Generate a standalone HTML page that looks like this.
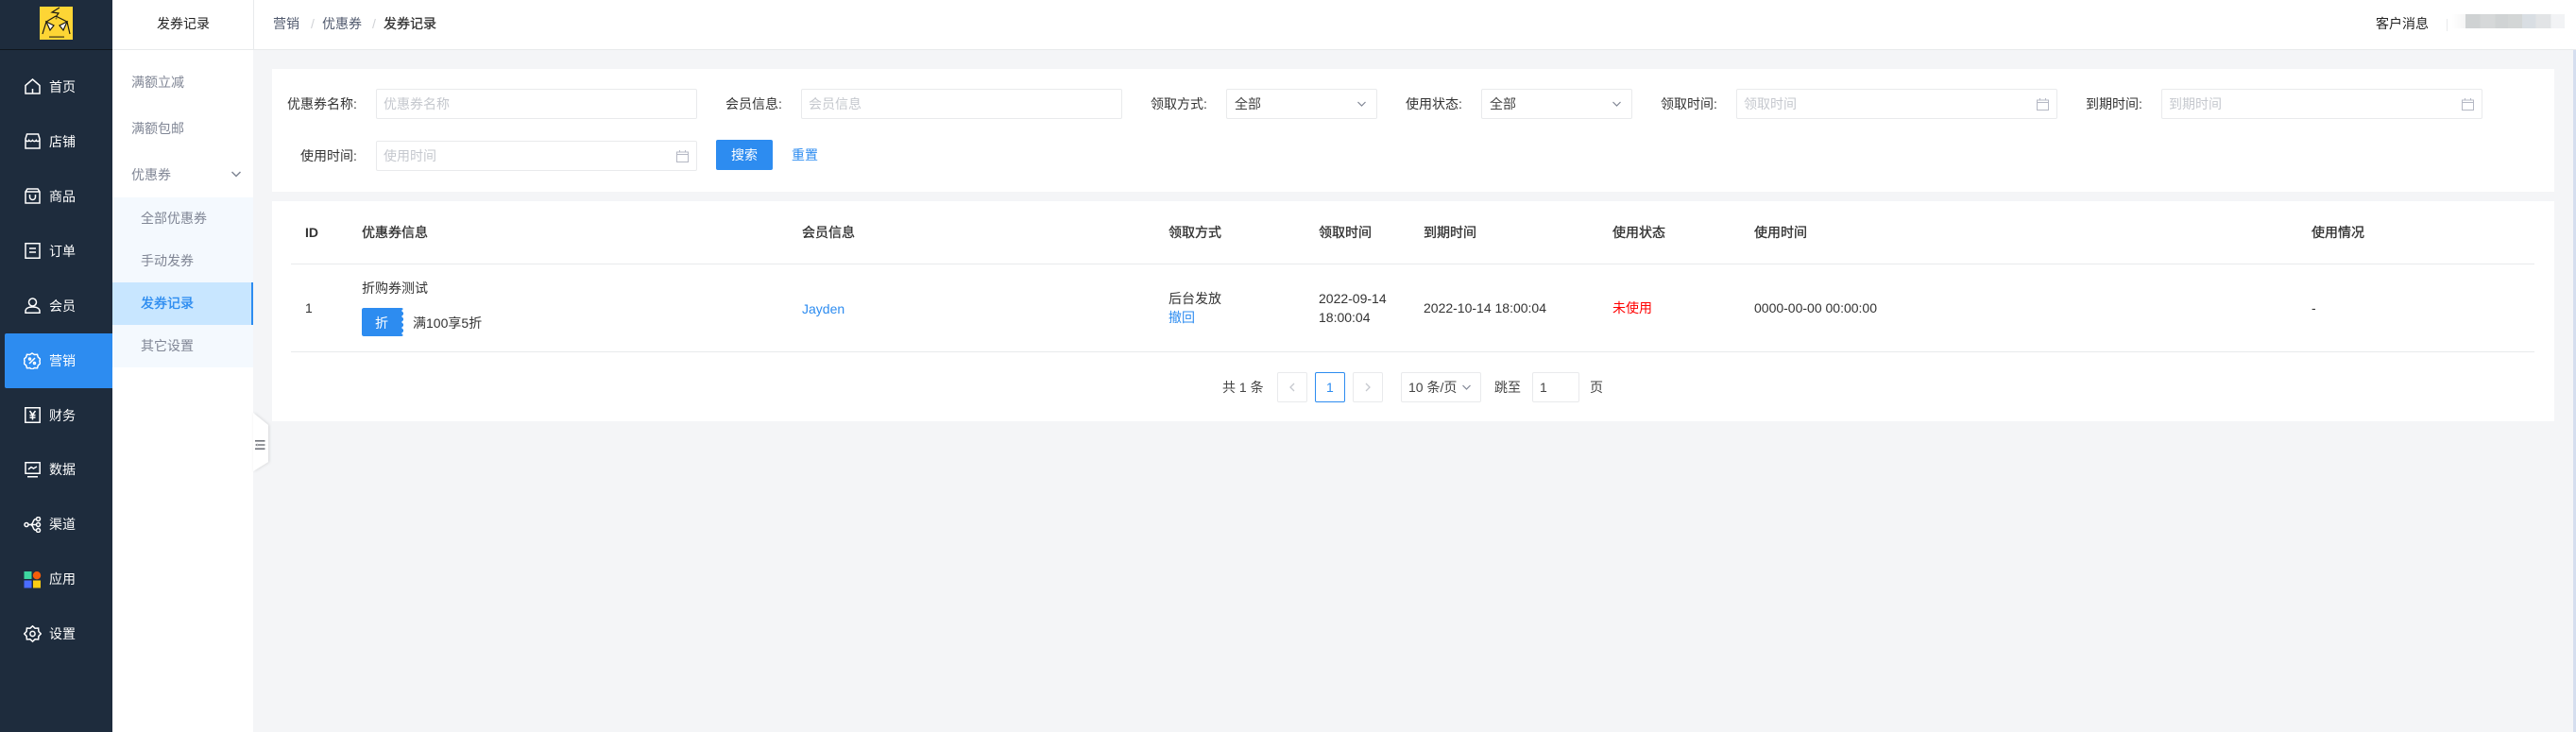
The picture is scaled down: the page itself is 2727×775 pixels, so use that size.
<!DOCTYPE html>
<html lang="zh"><head><meta charset="utf-8"><title>发券记录</title>
<style>
*{box-sizing:border-box}
html,body{margin:0;padding:0}
body{width:2727px;height:775px;position:relative;overflow:hidden;background:#f4f5f7;font:14px/20px "Liberation Sans","Noto Sans CJK SC",sans-serif;color:#515a6e}
.a,.t,.b,svg{position:absolute}
.t{white-space:nowrap;line-height:20px}
.m{color:#fff;left:52px}
.s{color:#808695}
.l{color:#333}
.h{color:#333;top:236px;-webkit-text-stroke:.35px #333}
.c{color:#444}
.b{background:#fff;border:1px solid #e9eaec;border-radius:2px;height:32px}
.p{color:#c5c8ce}
.k{color:#2d8cf0}
svg{fill:none;stroke:#fff;stroke-width:1.5}
</style></head><body>
<!-- dark sidebar -->
<div class="a" style="left:0;top:0;width:119px;height:775px;background:#1e2c3d"></div>
<div class="a" style="left:0;top:52px;width:119px;height:1px;background:#10161e"></div>
<svg style="left:42px;top:7px;stroke:none" width="35" height="35" viewBox="0 0 35 35">
<rect width="35" height="35" fill="#fdd535"/>
<path d="M21 1l-8 5 7 1-3 4M17 10L7 16 3 29M17 10l12 6 3 13" stroke="#1c1a12" stroke-width="1.200" fill="none"/>
<path d="M7 16l8 4-4 5zM29 16l-8 4 4 5z" fill="#fff" stroke="#1c1a12" stroke-width="1.200"/>
<circle cx="17.500" cy="12.500" r="1" fill="#7a6a20"/>
<rect x="10" y="31.500" width="16" height="1.200" fill="#3a3318"/>
</svg>
<div class="a" style="left:5px;top:353px;width:114px;height:58px;background:#2d8cf0;border-radius:2px 0 0 2px"></div>
<!-- icons -->
<svg style="left:26px;top:83px" width="17" height="17" viewBox="0 0 17 17"><path d="M1 7.500L8.500 1 16 7.500V16H1zM8.500 16v-5"/></svg>
<svg style="left:26px;top:141px" width="17" height="17" viewBox="0 0 17 17"><path d="M2.500 1h12L16 6v10H1V6zM1 7.500c2 1.500 3 1.500 3.700 0 1 1.500 2.500 1.500 3.800 0 1 1.500 2.800 1.500 3.800 0 .8 1.500 2 1.500 3.700 0"/></svg>
<svg style="left:26px;top:199px" width="17" height="17" viewBox="0 0 17 17"><path d="M3 1h11l2 3v12H1V4zM1 4h15M5.500 7v2.500a3 3 0 006 0V7"/></svg>
<svg style="left:26px;top:257px" width="17" height="17" viewBox="0 0 17 17"><path d="M1 .8h15v15.500H1zM5 6h7M5 10h7"/></svg>
<svg style="left:26px;top:315px" width="17" height="17" viewBox="0 0 17 17"><circle cx="8.500" cy="5" r="4"/><path d="M1 16.200v-1.700c0-3 3-4.500 7.500-4.500s7.500 1.500 7.500 4.500v1.700z"/></svg>
<svg style="left:25px;top:373px" width="18" height="18" viewBox="0 0 18 18"><path d="M9 1l2.500 1.500 3-.2.800 2.800L17.500 7 17 9.500l.5 2.500-2.200 1.900-.8 2.800-3-.2L9 18l-2.500-1.500-3 .2-.8-2.800L.5 12 1 9.500.5 7l2.200-1.900.8-2.800 3 .2zM6 12l6-6"/><circle cx="6.500" cy="7" r="1" /><circle cx="11.500" cy="11.500" r="1"/></svg>
<svg style="left:26px;top:431px" width="17" height="17" viewBox="0 0 17 17"><path d="M.8.800h15.400v15.400H.8zM5.500 4l3 4 3-4M8.500 8v5.500M5.500 8.500h6M5.500 11h6"/></svg>
<svg style="left:26px;top:489px" width="17" height="17" viewBox="0 0 17 17"><path d="M1 .8h15.200v11.500H1zM3 15.800h11M4 8l3-2.500 2.500 1.500L13 5"/></svg>
<svg style="left:25px;top:547px" width="19" height="17" viewBox="0 0 19 17"><circle cx="3" cy="8.500" r="2"/><circle cx="15.500" cy="2.500" r="2"/><circle cx="15.500" cy="8.500" r="2"/><circle cx="15.500" cy="14.500" r="2"/><path d="M5 8.500h8.500M13.500 2.500C9 2.500 11 8.500 7 8.500c4 0 2 6 6.500 6"/></svg>
<svg style="left:25px;top:605px;stroke:none" width="19" height="18" viewBox="0 0 19 18"><rect x=".5" width="8" height="8" fill="#3dd6a0"/><circle cx="14" cy="4.200" r="4.200" fill="#f55e0a"/><rect x=".5" y="9.500" width="8" height="8" fill="#4a6cff"/><rect x="10" y="9.500" width="8" height="8" fill="#fbcd13"/></svg>
<svg style="left:25px;top:662px" width="19" height="19" viewBox="0 0 19 19"><path d="M9.500 .8l2.600 2.400 3.500-.2.300 3.500 2.400 2.500-2.400 2.500-.3 3.500-3.500-.2-2.600 2.400-2.600-2.400-3.500.2-.3-3.500L.7 9 3.100 6.500 3.400 3l3.500.2z"/><circle cx="9.500" cy="9" r="2.600"/></svg>
<div class="t m" style="top:82px">首页</div>
<div class="t m" style="top:140px">店铺</div>
<div class="t m" style="top:198px">商品</div>
<div class="t m" style="top:256px">订单</div>
<div class="t m" style="top:314px">会员</div>
<div class="t m" style="top:372px">营销</div>
<div class="t m" style="top:430px">财务</div>
<div class="t m" style="top:487px">数据</div>
<div class="t m" style="top:545px">渠道</div>
<div class="t m" style="top:603px">应用</div>
<div class="t m" style="top:661px">设置</div>
<!-- secondary sidebar -->
<div class="a" style="left:119px;top:0;width:149px;height:775px;background:#fff"></div>
<div class="a" style="left:268px;top:0;width:2459px;height:52px;background:#fff;border-left:1px solid #e8eaec"></div>
<div class="a" style="left:119px;top:52px;width:2608px;height:1px;background:#e8eaec"></div>
<div class="a" style="left:2724px;top:53px;width:3px;height:722px;background:#d5deef"></div>
<div class="t" style="left:166px;top:15px;color:#222">发券记录</div>
<div class="t s" style="left:139px;top:77px">满额立减</div>
<div class="t s" style="left:139px;top:126px">满额包邮</div>
<div class="t s" style="left:139px;top:175px">优惠券</div>
<svg style="left:245px;top:181px;stroke:#808695" width="10" height="7" viewBox="0 0 10 7"><path d="M.5 1l4.500 4.500L9.500 1"/></svg>
<div class="a" style="left:119px;top:209px;width:149px;height:180px;background:#f4f9fe"></div>
<div class="a" style="left:119px;top:299px;width:149px;height:45px;background:#c8e6ff;border-right:2px solid #2d8cf0"></div>
<div class="t s" style="left:149px;top:221px">全部优惠券</div>
<div class="t s" style="left:149px;top:266px">手动发券</div>
<div class="t k" style="left:149px;top:311px;-webkit-text-stroke:.35px #2d8cf0">发券记录</div>
<div class="t s" style="left:149px;top:356px">其它设置</div>
<!-- collapse handle -->
<div class="a" style="left:268px;top:437px;width:18px;height:62px;filter:drop-shadow(1px 0 1.500px rgba(0,0,0,.12))"><div style="width:16px;height:62px;background:#fff;clip-path:polygon(0 0,100% 21%,100% 84%,0 100%)"></div></div>
<svg style="left:270px;top:466px;stroke:none;fill:#73767d" width="11" height="11" viewBox="0 0 11 11"><path d="M0 0h10.500v1.600H0zM3 4.200h7.500v1.600H3zM0 8.400h10.500V10H0zM0 5l2.500-1.500v3z"/></svg>
<!-- header -->
<div class="t" style="left:289px;top:15px;color:#515a6e">营销</div>
<div class="t" style="left:329px;top:15px;color:#d0d2d6">/</div>
<div class="t" style="left:341px;top:15px;color:#515a6e">优惠券</div>
<div class="t" style="left:394px;top:15px;color:#d0d2d6">/</div>
<div class="t" style="left:406px;top:15px;color:#333;-webkit-text-stroke:.3px #333">发券记录</div>
<div class="t" style="left:2515px;top:15px;color:#222">客户消息</div>
<div class="a" style="left:2590px;top:20px;width:1px;height:13px;background:#e8eaec"></div>
<div class="a" style="left:2596px;top:15px;width:14px;height:15px;background:linear-gradient(90deg,#fff,#f5f5f5)"></div>
<div class="a" style="left:2610px;top:15px;width:105px;height:15px;background:linear-gradient(90deg,#cfd2d3 0 15%,#d6d8d9 15% 30%,#d0d3d4 30% 43%,#d3d6d6 43% 57%,#d9dee3 57% 71%,#e2e4e6 71% 86%,#f2f3f5 86%)"></div>
<!-- filter card -->
<div class="a" style="left:288px;top:73px;width:2416px;height:130px;background:#fff"></div>
<div class="t l" style="left:304px;top:100px">优惠券名称:</div>
<div class="b" style="left:398px;top:94px;width:340px"></div><div class="t p" style="left:406px;top:100px">优惠券名称</div>
<div class="t l" style="left:768px;top:100px">会员信息:</div>
<div class="b" style="left:848px;top:94px;width:340px"></div><div class="t p" style="left:856px;top:100px">会员信息</div>
<div class="t l" style="left:1218px;top:100px">领取方式:</div>
<div class="b" style="left:1298px;top:94px;width:160px"></div><div class="t c" style="left:1307px;top:100px">全部</div>
<svg style="left:1437px;top:107px;stroke:#808695;stroke-width:1.200" width="9" height="6" viewBox="0 0 9 6"><path d="M.5 1l4 4 4-4"/></svg>
<div class="t l" style="left:1488px;top:100px">使用状态:</div>
<div class="b" style="left:1568px;top:94px;width:160px"></div><div class="t c" style="left:1577px;top:100px">全部</div>
<svg style="left:1707px;top:107px;stroke:#808695;stroke-width:1.200" width="9" height="6" viewBox="0 0 9 6"><path d="M.5 1l4 4 4-4"/></svg>
<div class="t l" style="left:1758px;top:100px">领取时间:</div>
<div class="b" style="left:1838px;top:94px;width:340px"></div><div class="t p" style="left:1846px;top:100px">领取时间</div>
<svg style="left:2156px;top:104px;stroke:#b5b8c4;stroke-width:1" width="13" height="13" viewBox="0 0 13 13"><path d="M.5 2h12v10.500H.5zM.5 4.500h12M3.500 0v2.500M9.500 0v2.500"/></svg>
<div class="t l" style="left:2208px;top:100px">到期时间:</div>
<div class="b" style="left:2288px;top:94px;width:340px"></div><div class="t p" style="left:2296px;top:100px">到期时间</div>
<svg style="left:2606px;top:104px;stroke:#b5b8c4;stroke-width:1" width="13" height="13" viewBox="0 0 13 13"><path d="M.5 2h12v10.500H.5zM.5 4.500h12M3.500 0v2.500M9.500 0v2.500"/></svg>
<div class="t l" style="left:318px;top:155px">使用时间:</div>
<div class="b" style="left:398px;top:149px;width:340px"></div><div class="t p" style="left:406px;top:155px">使用时间</div>
<svg style="left:716px;top:159px;stroke:#b5b8c4;stroke-width:1" width="13" height="13" viewBox="0 0 13 13"><path d="M.5 2h12v10.500H.5zM.5 4.500h12M3.500 0v2.500M9.500 0v2.500"/></svg>
<div class="a" style="left:758px;top:148px;width:60px;height:32px;background:#2d8cf0;border-radius:2px"></div>
<div class="t" style="left:774px;top:154px;color:#fff">搜索</div>
<div class="t k" style="left:838px;top:154px">重置</div>
<!-- table card -->
<div class="a" style="left:288px;top:213px;width:2416px;height:233px;background:#fff"></div>
<div class="t h" style="left:323px;font-weight:700;-webkit-text-stroke:0">ID</div>
<div class="t h" style="left:383px">优惠券信息</div>
<div class="t h" style="left:849px">会员信息</div>
<div class="t h" style="left:1237px">领取方式</div>
<div class="t h" style="left:1396px">领取时间</div>
<div class="t h" style="left:1507px">到期时间</div>
<div class="t h" style="left:1707px">使用状态</div>
<div class="t h" style="left:1857px">使用时间</div>
<div class="t h" style="left:2447px">使用情况</div>
<div class="a" style="left:308px;top:279px;width:2375px;height:1px;background:#e8eaec"></div>
<div class="a" style="left:308px;top:372px;width:2375px;height:1px;background:#e8eaec"></div>
<div class="t l" style="left:323px;top:316px">1</div>
<div class="t l" style="left:383px;top:295px">折购券测试</div>
<div class="a" style="left:383px;top:326px;width:44px;height:30px;background:#2d8cf0;border-radius:2px;-webkit-mask:radial-gradient(circle 1.600px at 44px 50%,transparent 98%,#000) 0 0/100% 6px"></div>
<div class="t" style="left:397px;top:332px;color:#fff">折</div>
<div class="t l" style="left:437px;top:332px">满100享5折</div>
<div class="t k" style="left:849px;top:317px">Jayden</div>
<div class="t l" style="left:1237px;top:306px">后台发放</div>
<div class="t k" style="left:1237px;top:326px">撤回</div>
<div class="t l" style="left:1396px;top:306px">2022-09-14</div>
<div class="t l" style="left:1396px;top:326px">18:00:04</div>
<div class="t l" style="left:1507px;top:316px">2022-10-14 18:00:04</div>
<div class="t" style="left:1707px;top:316px;color:#f00">未使用</div>
<div class="t l" style="left:1857px;top:316px">0000-00-00 00:00:00</div>
<div class="t l" style="left:2447px;top:316px">-</div>
<!-- pagination -->
<div class="t c" style="left:1294px;top:400px">共 1 条</div>
<div class="b" style="left:1352px;top:394px;width:32px"></div>
<svg style="left:1365px;top:405px;stroke:#c5c8ce;stroke-width:1.300" width="6" height="10" viewBox="0 0 6 10"><path d="M5 1L1 5l4 4"/></svg>
<div class="b" style="left:1392px;top:394px;width:32px;border-color:#2d8cf0"></div>
<div class="t k" style="left:1404px;top:400px">1</div>
<div class="b" style="left:1432px;top:394px;width:32px"></div>
<svg style="left:1445px;top:405px;stroke:#c5c8ce;stroke-width:1.300" width="6" height="10" viewBox="0 0 6 10"><path d="M1 1l4 4-4 4"/></svg>
<div class="b" style="left:1483px;top:394px;width:85px"></div>
<div class="t c" style="left:1491px;top:400px">10 条/页</div>
<svg style="left:1548px;top:407px;stroke:#808695;stroke-width:1.200" width="9" height="6" viewBox="0 0 9 6"><path d="M.5 1l4 4 4-4"/></svg>
<div class="t c" style="left:1582px;top:400px">跳至</div>
<div class="b" style="left:1622px;top:394px;width:50px"></div>
<div class="t c" style="left:1630px;top:400px">1</div>
<div class="t c" style="left:1683px;top:400px">页</div>
</body></html>
